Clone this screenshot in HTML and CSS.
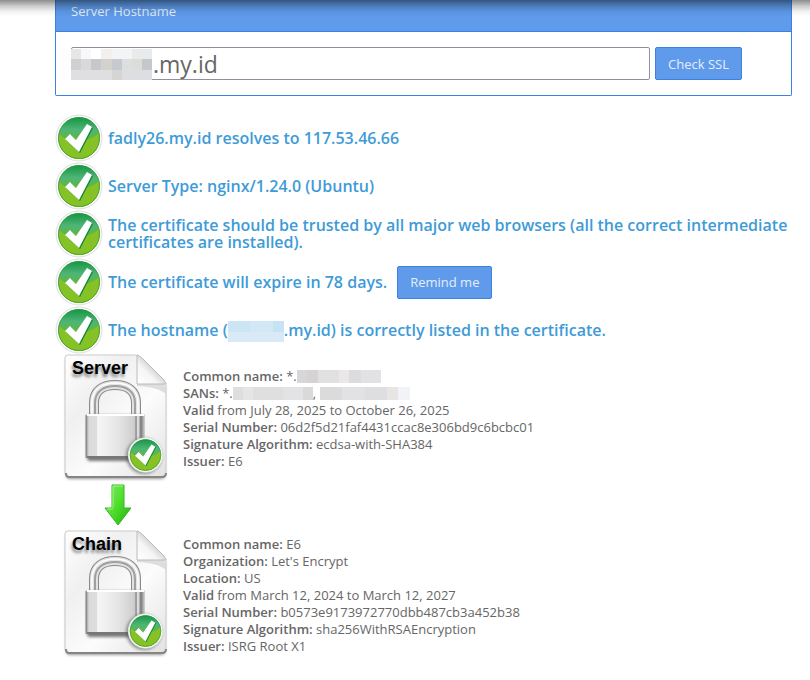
FILE: index.html
```html
<!DOCTYPE html>
<html lang="en">
<head>
  <meta charset="UTF-8">
  <meta name="viewport" content="width=device-width, initial-scale=1.0">
  <title>SSL Checker</title>
  <link rel="stylesheet" href="styles.css">
</head>
<body>
  <!-- Shared icon definitions -->
  <svg class="defs" width="0" height="0" aria-hidden="true">
    <defs>
      <linearGradient id="green" x1="0" y1="0" x2="0" y2="1">
        <stop offset="0" stop-color="#159443"/>
        <stop offset="0.3" stop-color="#4db576"/>
        <stop offset="0.5" stop-color="#5fb548"/>
        <stop offset="1" stop-color="#66b020"/>
      </linearGradient>
      <linearGradient id="paper" x1="0" y1="0" x2="1" y2="1">
        <stop offset="0" stop-color="#ffffff"/>
        <stop offset="0.3" stop-color="#f0f0f0"/>
        <stop offset="0.6" stop-color="#fcfcfc"/>
        <stop offset="1" stop-color="#e2e2e2"/>
      </linearGradient>
      <linearGradient id="fold" x1="0" y1="1" x2="0.6" y2="0.4">
        <stop offset="0" stop-color="#ffffff"/>
        <stop offset="0.6" stop-color="#f6f6f6"/>
        <stop offset="1" stop-color="#cecece"/>
      </linearGradient>
      <linearGradient id="steel" x1="0" y1="0" x2="1" y2="0">
        <stop offset="0" stop-color="#8c8c8c"/>
        <stop offset="0.05" stop-color="#dadada"/>
        <stop offset="0.18" stop-color="#dedede"/>
        <stop offset="0.2" stop-color="#f6f6f6"/>
        <stop offset="0.55" stop-color="#e4e4e4"/>
        <stop offset="0.82" stop-color="#cecece"/>
        <stop offset="0.85" stop-color="#888888"/>
        <stop offset="0.88" stop-color="#f4f4f4"/>
        <stop offset="0.93" stop-color="#777777"/>
        <stop offset="1" stop-color="#d8d8d8"/>
      </linearGradient>
      <linearGradient id="arrow-fill" x1="0" y1="0" x2="1" y2="1">
        <stop offset="0" stop-color="#7bee62"/>
        <stop offset="0.5" stop-color="#4fdd2c"/>
        <stop offset="1" stop-color="#1fae0c"/>
      </linearGradient>
      <filter id="soft" x="-20%" y="-20%" width="140%" height="140%">
        <feGaussianBlur stdDeviation="1.5"/>
      </filter>

      <symbol id="check" viewBox="0 0 48 48">
        <circle cx="24" cy="24" r="23" fill="#fdfdfd" stroke="#dedede" stroke-width="1"/>
        <circle cx="24" cy="24" r="21" fill="url(#green)"/>
        <path d="M4 20 Q13 29 24 27 Q36 26 44 19 A21 21 0 0 1 24 45 A21 21 0 0 1 4 20Z" fill="#86c226"/>
        <circle cx="24" cy="24" r="20.5" fill="none" stroke="#2d9a35" stroke-opacity="0.6"/>
        <path d="M10 25 L15 20 L21 26 L32 10 L37 13 L24 38Z" fill="#0f8a35" transform="translate(1 1)"/>
        <path d="M10 25 L15 20 L21 26 L32 10 L37 13 L24 38Z" fill="#ffffff"/>
      </symbol>

      <symbol id="certificate" viewBox="0 0 108 130">
        <path d="M5 6 Q5 3 8 3 H75 L104 31 V121 Q104 125 100 125 H9 Q5 125 5 121Z" fill="#999999" filter="url(#soft)"/>
        <path d="M4 4 Q4 1 7 1 H74 Q77 1 80 4 L103 27 Q105 29 105 33 V119 Q105 123 101 123 H8 Q4 123 4 119Z" fill="url(#paper)" stroke="#cccccc"/>
        <path d="M5 119 Q5 123 8 123 H101 Q105 123 105 119" fill="none" stroke="#858585" stroke-width="2"/>
        <path d="M76 30 H103 Q105 33 105 40 Q97 33 76 32Z" fill="#d2d2d2" opacity="0.7"/>
        <path d="M76 1 V30 H105 Q104 27 102 25 L81 4 Q79 2 76 1Z" fill="url(#fold)" stroke="#bbbbbb"/>
        <path d="M33 62 V49 C33 36 42 31 54 31 C66 31 75 36 75 49 V62" fill="none" stroke="#8a8a8a" stroke-width="10"/>
        <path d="M33 62 V49 C33 36 42 31 54 31 C66 31 75 36 75 49 V62" fill="none" stroke="#e2e2e2" stroke-width="8"/>
        <path d="M34 62 V49 C34 37 43 32 54 32 C65 32 74 37 74 49 V62" fill="none" stroke="#a0a0a0" stroke-width="2"/>
        <path d="M31 62 V49 C31 35 41 29 54 29 C67 29 77 35 77 49 V62" fill="none" stroke="#ffffff" stroke-width="1.5"/>
        <rect x="26" y="61" width="56" height="46" rx="3" fill="#777777" filter="url(#soft)"/>
        <rect x="25" y="60" width="59" height="44" rx="2" fill="url(#steel)"/>
        <path d="M25 104 V61" stroke="#858585"/>
        <path d="M26 61 H83" stroke="#ffffff" stroke-width="2"/>
        <path d="M26 103 H80" stroke="#777777" stroke-width="2"/>
        <circle cx="83" cy="102" r="18" fill="#555555" opacity="0.6" filter="url(#soft)"/>
        <circle cx="84.500" cy="101" r="17" fill="#ffffff"/>
        <use href="#check" x="66.500" y="83" width="36" height="36"/>
      </symbol>
    </defs>
  </svg>

  <div class="page-shadow"></div>

  <main class="container">
    <form class="panel">
      <label class="panel-title" for="hostname">Server Hostname</label>
      <div class="panel-body">
        <div class="host-field">
          <input type="text" id="hostname" class="host-input" value=".my.id">
          <svg class="host-mask" width="91" height="31" viewBox="0 0 91 31" aria-hidden="true">
            <path d="M0 0h10v31H0z" fill="#fdfdfd"/>
            <path d="M10 0h10v10H10z" fill="#e6e6e6"/><path d="M20 0h10v10H20z" fill="#f7f8fb"/>
            <path d="M30 0h10v10H30z" fill="#ffffff"/><path d="M40 0h11v10H40z" fill="#f1f0ef"/>
            <path d="M51 0h20v10H51z" fill="#f3f4f6"/><path d="M71 0h20v10H71z" fill="#e9eaec"/>
            <path d="M10 10h10v11H10z" fill="#cfd0d2"/><path d="M20 10h10v11H20z" fill="#dad9d7"/>
            <path d="M30 10h10v11H30z" fill="#c6c8cb"/><path d="M40 10h11v11H40z" fill="#d3d2cf"/>
            <path d="M51 10h10v11H51z" fill="#c6cace"/><path d="M61 10h10v11H61z" fill="#dddee0"/>
            <path d="M71 10h10v11H71z" fill="#dddcd9"/><path d="M81 10h10v11H81z" fill="#c4c7cb"/>
            <path d="M10 21h41v10H10z" fill="#dfdfe1"/><path d="M51 21h10v10H51z" fill="#d7d4d4"/>
            <path d="M61 21h30v10H61z" fill="#dddee2"/>
          </svg>
        </div>
        <button type="button" class="button">Check SSL</button>
      </div>
    </form>

    <ul class="results">
      <li class="result">
        <svg class="result-icon" aria-hidden="true"><use href="#check"/></svg>
        <p>fadly26.my.id resolves to 117.53.46.66</p>
      </li>
      <li class="result">
        <svg class="result-icon" aria-hidden="true"><use href="#check"/></svg>
        <p>Server Type: nginx/1.24.0 (Ubuntu)</p>
      </li>
      <li class="result">
        <svg class="result-icon" aria-hidden="true"><use href="#check"/></svg>
        <p>The certificate should be trusted by all major web browsers (all the correct intermediate certificates are installed).</p>
      </li>
      <li class="result">
        <svg class="result-icon" aria-hidden="true"><use href="#check"/></svg>
        <p>The certificate will expire in 78 days.</p>
        <button type="button" class="button">Remind me</button>
      </li>
      <li class="result">
        <svg class="result-icon" aria-hidden="true"><use href="#check"/></svg>
        <p>The hostname (<span class="mask mask-blue"></span>.my.id) is correctly listed in the certificate.</p>
      </li>
    </ul>

    <section class="cert">
      <div class="cert-badge">
        <svg class="cert-icon" aria-hidden="true"><use href="#certificate"/></svg>
        <span class="cert-label">Server</span>
      </div>
      <div class="cert-info">
        <div><b>Common name:</b> *.<span class="mask mask-name"></span></div>
        <div><b>SANs:</b> *.<span class="mask mask-san"></span>, <span class="mask mask-alt"></span></div>
        <div><b>Valid</b> from July 28, 2025 to October 26, 2025</div>
        <div><b>Serial Number:</b> 06d2f5d21faf4431ccac8e306bd9c6bcbc01</div>
        <div><b>Signature Algorithm:</b> ecdsa-with-SHA384</div>
        <div><b>Issuer:</b> E6</div>
      </div>
    </section>

    <div class="chain-arrow">
      <svg width="28" height="42" viewBox="0 0 28 42" aria-hidden="true">
        <path d="M8 1 H20 V24 H27 L14 41 L1 24 H8Z" fill="url(#arrow-fill)" stroke="#35b81f"/>
        <path d="M9 24 V2 H19" fill="none" stroke="#a4f58d"/>
        <path d="M3 25 H9" stroke="#a4f58d"/>
      </svg>
    </div>

    <section class="cert">
      <div class="cert-badge">
        <svg class="cert-icon" aria-hidden="true"><use href="#certificate"/></svg>
        <span class="cert-label">Chain</span>
      </div>
      <div class="cert-info">
        <div><b>Common name:</b> E6</div>
        <div><b>Organization:</b> Let's Encrypt</div>
        <div><b>Location:</b> US</div>
        <div><b>Valid</b> from March 12, 2024 to March 12, 2027</div>
        <div><b>Serial Number:</b> b0573e9173972770dbb487cb3a452b38</div>
        <div><b>Signature Algorithm:</b> sha256WithRSAEncryption</div>
        <div><b>Issuer:</b> ISRG Root X1</div>
      </div>
    </section>
  </main>
</body>
</html>
```

FILE: styles.css
```css
* {
  box-sizing: border-box;
}

body {
  margin: 0;
  background: #ffffff;
  color: #666666;
  font-family: "Open Sans", sans-serif;
  font-size: 13px;
  line-height: 17px;
}

.defs {
  position: absolute;
}

.page-shadow {
  position: fixed;
  top: 0;
  left: 0;
  right: 0;
  height: 16px;
  background: linear-gradient(rgba(0, 0, 0, 0.45), rgba(0, 0, 0, 0.22) 35%, rgba(0, 0, 0, 0.06) 70%, rgba(0, 0, 0, 0));
  pointer-events: none;
  z-index: 10;
}

.container {
  margin: 0 18px 0 55px;
}

/* Hostname form */
.panel {
  border: 1px solid #3b82e0;
  border-top: none;
  border-radius: 0 0 2px 2px;
}

.panel-title {
  display: block;
  height: 32px;
  padding: 3px 15px;
  background: #5f9bea;
  border-bottom: 1px solid #3b82e0;
  color: #e4eefb;
}

.panel-body {
  display: flex;
  align-items: center;
  gap: 5px;
  padding: 15px 49px 15px 15px;
}

.host-field {
  position: relative;
  flex: 1;
}

.host-input {
  display: block;
  width: 100%;
  height: 33px;
  padding: 0 0 0 81px;
  border: 1px solid #8f8f9d;
  border-radius: 2px;
  background: #ffffff;
  color: #666666;
  font-family: inherit;
  font-size: 23px;
}

.host-mask {
  position: absolute;
  top: 2px;
  left: -10px;
}

.button {
  height: 33px;
  padding: 0 12px;
  background: #5f9bea;
  border: 1px solid #3b82e0;
  border-radius: 2px;
  color: #e4eefb;
  font-family: inherit;
  font-size: 13px;
  cursor: pointer;
}

/* Check results */
.results {
  list-style: none;
  margin: 18px 0 0;
  padding: 0;
}

.result {
  display: flex;
  align-items: center;
  min-height: 48px;
  color: #3e9bd7;
  font-size: 16px;
  font-weight: 600;
}

.result p {
  margin: 0;
}

.result .button {
  margin-left: 10px;
}

.result-icon {
  flex: none;
  width: 48px;
  height: 48px;
  margin-right: 5px;
}

/* Certificates */
.cert {
  display: flex;
  align-items: center;
  min-height: 130px;
  padding-left: 6px;
}

.cert-badge {
  position: relative;
  flex: none;
  width: 108px;
  height: 130px;
  margin-right: 14px;
}

.cert-icon {
  display: block;
  width: 108px;
  height: 130px;
}

.cert-label {
  position: absolute;
  top: 6px;
  left: 11px;
  color: #000000;
  font-family: "Liberation Sans", Arial, sans-serif;
  font-size: 18px;
  font-weight: bold;
  text-shadow: -1px 3px 3px rgba(0, 0, 0, 0.45);
}

.cert-info b {
  font-weight: 600;
}

.chain-arrow {
  height: 46px;
  padding-left: 49px;
}

/* Hidden parts of names */
.mask {
  display: inline-block;
  height: 13px;
  vertical-align: -2px;
}

.mask-blue {
  width: 56px;
  height: 21px;
  margin: -4px 0;
  vertical-align: middle;
  background: linear-gradient(90deg, #cce5f5 40%, #d3e8f6 40% 80%, #c6e2f4 80%);
  border-bottom: 10px solid #d9eaf6;
}

.mask-name {
  width: 84px;
  background: linear-gradient(90deg, #d7d6d8 12%, #d6d4d2 12% 25%, #e1e1e2 25% 50%, #e9e8e6 50% 62%, #dcdcde 62% 76%, #e2e2e5 76%);
}

.mask-san {
  width: 80px;
  background: linear-gradient(90deg, #dfdedd 12%, #e5e5e6 12% 25%, #dfdfe0 25% 62%, #e3e3e5 62% 88%, #d9d9da 88%);
}

.mask-alt {
  width: 90px;
  background: linear-gradient(90deg, #dbdbdc 25%, #e2e2e4 25% 50%, #dedee0 50% 75%, #e7e6e5 75% 87%, #f2f3f7 87%);
}
```
